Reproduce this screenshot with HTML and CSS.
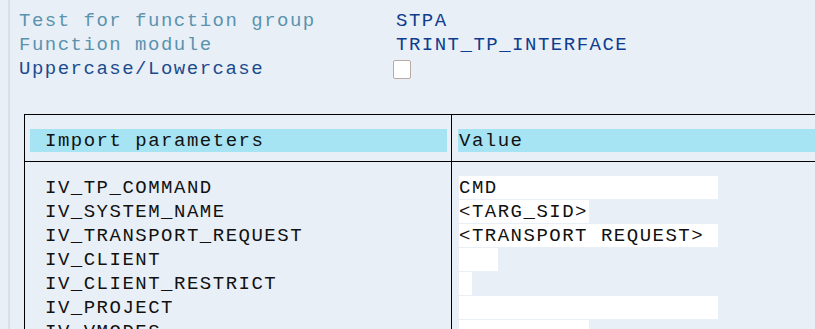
FILE: index.html
```html
<!DOCTYPE html>
<html lang="en">
<head>
    <meta charset="UTF-8">
    <title>Test Function Module</title>
    <link rel="stylesheet" href="styles.css">
</head>
<body>
    <div class="screen">
        <div class="fields">
            <div class="label muted">Test for function group</div>
            <div class="value">STPA</div>
            <div class="label muted">Function module</div>
            <div class="value">TRINT_TP_INTERFACE</div>
            <div class="label">Uppercase/Lowercase</div>
            <div class="value"><span class="checkbox"></span></div>
        </div>

        <div class="params">
            <div class="head-cell name-col"><div class="band band-name">Import parameters</div></div>
            <div class="head-cell"><div class="band band-value">Value</div></div>

            <div class="body-cell name-col">
                <div class="row">IV_TP_COMMAND</div>
                <div class="row">IV_SYSTEM_NAME</div>
                <div class="row">IV_TRANSPORT_REQUEST</div>
                <div class="row">IV_CLIENT</div>
                <div class="row">IV_CLIENT_RESTRICT</div>
                <div class="row">IV_PROJECT</div>
                <div class="row">IV_VMODES</div>
            </div>
            <div class="body-cell values">
                <div class="row"><span class="input w20">CMD</span></div>
                <div class="row"><span class="input w10">&lt;TARG_SID&gt;</span></div>
                <div class="row"><span class="input w20">&lt;TRANSPORT REQUEST&gt;</span></div>
                <div class="row"><span class="input w3"></span></div>
                <div class="row"><span class="input w1"></span></div>
                <div class="row"><span class="input w20"></span></div>
                <div class="row"><span class="input w10"></span></div>
            </div>
        </div>
    </div>
</body>
</html>
```

FILE: styles.css
```css
html, body {
    margin: 0;
    height: 100%;
    overflow: hidden;
}
body {
    background-color: #e9eff7;
    padding-left: 8px;
    font-family: "Liberation Mono", "DejaVu Sans Mono", monospace;
    font-size: 19px;
    letter-spacing: 1.5px;
    color: #111;
}
.screen {
    border-left: 2px solid #d8dfe9;
    height: 100%;
    padding: 9px 0 0 9px;
}
.fields {
    display: grid;
    grid-template-columns: 377px auto;
    line-height: 24px;
}
.label {
    color: #1c4b8c;
}
.label.muted {
    color: #5a93ad;
}
.value {
    color: #0d3d8e;
    display: flex;
    align-items: center;
}
.checkbox {
    display: inline-block;
    width: 16px;
    height: 17px;
    margin-left: -3px;
    background: #fff;
    border: 1px solid #b9aaa4;
    border-radius: 2px;
}
.params {
    margin: 33px 0 0 5px;
    width: 1000px;
    border: 1px solid #000;
    display: grid;
    grid-template-columns: 427px auto;
}
.name-col {
    border-right: 1px solid #000;
}
.head-cell {
    border-bottom: 1px solid #000;
    padding: 14px 0 9px;
}
.band {
    background-color: #a6e3f3;
    height: 23px;
    line-height: 25px;
}
.band-name {
    margin: 0 4px 0 5px;
    padding-left: 15px;
}
.band-value {
    margin-left: 6px;
    padding-left: 1px;
}
.body-cell {
    padding-top: 14px;
}
.body-cell.name-col .row {
    padding-left: 20px;
}
.row {
    height: 24px;
    line-height: 25px;
}
.values .row {
    padding-left: 7px;
}
.input {
    display: inline-block;
    height: 23px;
    line-height: 25px;
    background: #fff;
    vertical-align: top;
    white-space: pre;
}
.w20 { width: 259px; }
.w10 { width: 130px; }
.w3 { width: 39px; }
.w1 { width: 13px; }
```
